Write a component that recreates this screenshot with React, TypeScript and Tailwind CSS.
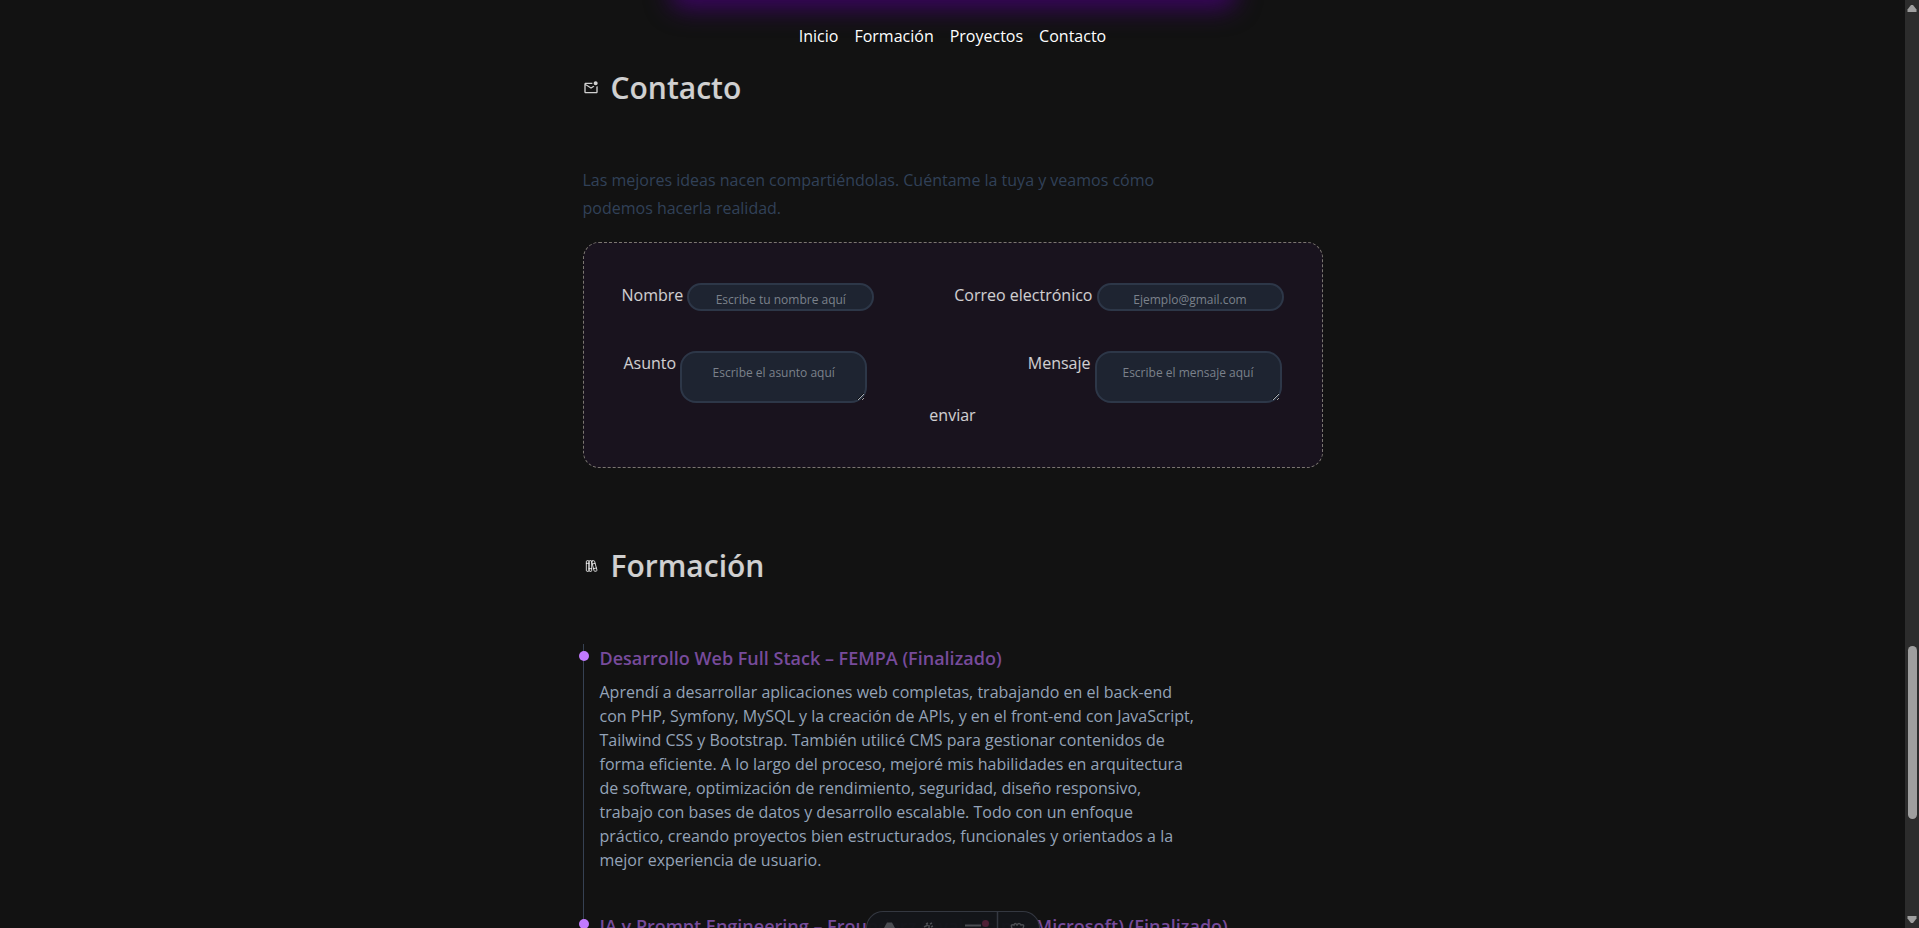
import { TbBooks } from "react-icons/tb";
import { MdOutlineMarkEmailUnread } from "react-icons/md";
import type { ReactNode } from "react";

const navLinks = [
  { label: "Inicio", href: "#inicio" },
  { label: "Formación", href: "#formacion" },
  { label: "Proyectos", href: "#proyectos" },
  { label: "Contacto", href: "#contacto" },
];

const studies = [
  {
    title: "Desarrollo Web Full Stack – FEMPA (Finalizado)",
    text: "Aprendí a desarrollar aplicaciones web completas, trabajando en el back-end con PHP, Symfony, MySQL y la creación de APIs, y en el front-end con JavaScript, Tailwind CSS y Bootstrap. También utilicé CMS para gestionar contenidos de forma eficiente. A lo largo del proceso, mejoré mis habilidades en arquitectura de software, optimización de rendimiento, seguridad, diseño responsivo, trabajo con bases de datos y desarrollo escalable. Todo con un enfoque práctico, creando proyectos bien estructurados, funcionales y orientados a la mejor experiencia de usuario.",
  },
  {
    title: "IA y Prompt Engineering – Frounderz (Avalado por Microsoft) (Finalizado)",
    text: "",
  },
];

function SectionTitle({ icon, children }: { icon: ReactNode; children: ReactNode }) {
  return (
    <h2 className="flex items-center gap-3 text-3xl font-semibold text-white/80">
      {icon}
      {children}
    </h2>
  );
}

const fieldClass =
  "border-2 border-[#2d3748] bg-[#1e2431] text-center text-xs font-medium text-white/80 placeholder:text-[#7b818b]";

function TextField({ id, label, placeholder, type }: { id: string; label: string; placeholder: string; type: string }) {
  return (
    <div className="flex items-start gap-1">
      <label htmlFor={id}>{label}</label>
      <input id={id} type={type} placeholder={placeholder} className={`${fieldClass} h-7 w-[187px] rounded-2xl pt-1`} />
    </div>
  );
}

function AreaField({ id, label, placeholder }: { id: string; label: string; placeholder: string }) {
  return (
    <div className="flex items-start gap-1">
      <label htmlFor={id}>{label}</label>
      <textarea id={id} placeholder={placeholder} className={`${fieldClass} h-13 w-[187px] resize rounded-2xl px-4 py-3`} />
    </div>
  );
}

function Scrollbar() {
  return (
    <div className="flex w-[14px] shrink-0 flex-col items-center justify-between bg-[#2c2c2c] py-1" aria-hidden="true">
      <svg width="10" height="8" viewBox="0 0 10 8" className="fill-[#9f9f9f]">
        <path d="M4 1H6L9.500 5.500V8H.5V5.500Z" />
      </svg>
      <div className="flex w-full grow flex-col items-center">
        <div className="grow-[635]" />
        <div className="w-[9px] grow-[173] rounded-full bg-[#9f9f9f]" />
        <div className="grow-[97]" />
      </div>
      <svg width="10" height="8" viewBox="0 0 10 8" className="fill-[#9f9f9f]">
        <path d="M4 7H6L9.500 2.500V0H.5V2.500Z" />
      </svg>
    </div>
  );
}

function DevToolbar() {
  return (
    <div
      className="fixed bottom-0 left-[calc(50%-7px)] flex h-[17px] w-[174px] -translate-x-1/2 items-start overflow-hidden rounded-t-[20px] border border-b-0 border-[#343841] bg-[#13151a]/98"
      aria-hidden="true"
    >
      <svg width="172" height="16" viewBox="0 0 172 16" fill="none" stroke="#4b4d52" strokeWidth="1.5">
        <path d="M17 16 20 10.5H25L28 16Z" fill="#4b4d52" stroke="none" />
        <path d="M57 15 61 13M62 16V13M63 12l2-1M59 12l2-1M64 15l2-1" />
        <path d="M98 13.500H114" strokeWidth="2" />
        <circle cx="118.500" cy="11.500" r="3.500" fill="#4d1f35" stroke="none" />
        <path d="M130.500 0V16" stroke="#343841" />
        <path d="M145 16Q143 12 147 13Q148 10 150 13Q152 10 154 13Q158 12 156 16" />
      </svg>
    </div>
  );
}

export default function App() {
  return (
    <div className="flex h-screen overflow-hidden bg-[#121212] font-['Open_Sans',sans-serif] text-base">
      <div className="min-w-0 flex-1">
        <header className="flex h-14 flex-col items-center">
          <div className="-mt-4 h-4 w-full max-w-[550px] shrink-0 rounded-lg shadow-[0_0_25px_9px_#3b0561]" />
          <nav className="flex gap-4 pt-6 font-medium text-white">
            {navLinks.map((link) => (
              <a key={link.href} href={link.href}>
                {link.label}
              </a>
            ))}
          </nav>
        </header>

        <main className="mx-auto w-full max-w-[740px]">
          <section id="contacto" className="pt-[14px]">
            <SectionTitle icon={<MdOutlineMarkEmailUnread className="size-4" />}>Contacto</SectionTitle>
            <p className="mt-15 max-w-[595px] leading-7 text-slate-700">
              Las mejores ideas nacen compartiéndolas. Cuéntame la tuya y veamos cómo podemos hacerla realidad.
            </p>
            <form
              className="mt-5 flex flex-col rounded-2xl border border-dashed border-[#7a7570] bg-[#19131e] px-[38px] py-10 font-medium text-white/80"
              onSubmit={(event) => event.preventDefault()}
            >
              <div className="flex justify-between">
                <TextField id="nombre" label="Nombre" type="text" placeholder="Escribe tu nombre aquí" />
                <TextField id="correo" label="Correo electrónico" type="email" placeholder="Ejemplo@gmail.com" />
              </div>
              <div className="mt-10 flex justify-between px-[2px]">
                <AreaField id="asunto" label="Asunto" placeholder="Escribe el asunto aquí" />
                <AreaField id="mensaje" label="Mensaje" placeholder="Escribe el mensaje aquí" />
              </div>
              <button type="submit" className="self-center">
                enviar
              </button>
            </form>
          </section>

          <section id="formacion" className="pt-20">
            <SectionTitle icon={<TbBooks className="size-4 [stroke-width:1.5]" />}>Formación</SectionTitle>
            <ol className="mt-15 border-l border-[#364153]">
              {studies.map((study) => (
                <li key={study.title} className="relative pb-10 pl-4">
                  <span className="absolute top-[7px] -left-[5px] size-[10px] rounded-full bg-[#c27aff]" />
                  <h3 className="text-lg font-semibold text-[#774b9b]">{study.title}</h3>
                  {study.text && <p className="mt-2 max-w-[595px] text-[#94a3b8]">{study.text}</p>}
                </li>
              ))}
            </ol>
          </section>
        </main>
      </div>
      <Scrollbar />
      <DevToolbar />
    </div>
  );
}
